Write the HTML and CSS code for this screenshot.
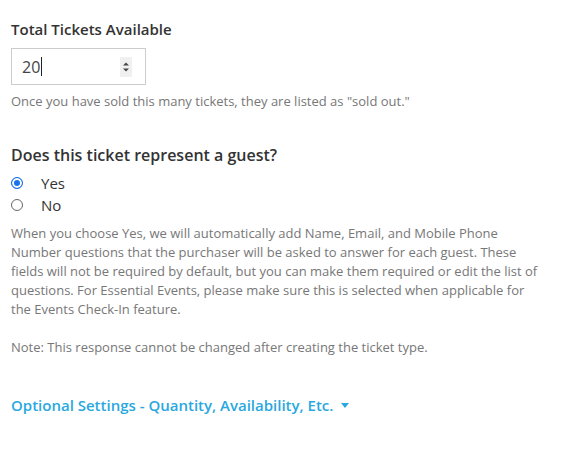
FILE: index.html
```html
<!DOCTYPE html>
<html>
<head>
<meta charset="utf-8">
<link rel="stylesheet" href="styles.css">
</head>
<body>
<div class="page">
  <section class="field">
    <div class="label">Total Tickets Available</div>
    <div class="num-input">
      <span class="value">20</span><span class="caret"></span>
      <span class="spin">
        <svg width="12" height="20" viewBox="0 0 12 20"><path d="M3 8.5 L6 5.5 L9 8.5 Z" fill="#444"/><path d="M3 11.5 L6 14.5 L9 11.5 Z" fill="#444"/></svg>
      </span>
    </div>
    <p class="help">Once you have sold this many tickets, they are listed as "sold out."</p>
  </section>

  <section class="field guest">
    <div class="question">Does this ticket represent a guest?</div>
    <div class="radios">
      <div class="radio-row"><span class="radio checked"></span><span class="radio-label">Yes</span></div>
      <div class="radio-row"><span class="radio"></span><span class="radio-label">No</span></div>
    </div>
    <p class="desc">When you choose Yes, we will automatically add Name, Email, and Mobile Phone Number questions that the purchaser will be asked to answer for each guest. These fields will not be required by default, but you can make them required or edit the list of questions. For Essential Events, please make sure this is selected when applicable for the Events Check-In feature.</p>
    <p class="desc note">Note: This response cannot be changed after creating the ticket type.</p>
  </section>

  <div class="optional">Optional Settings - Quantity, Availability, Etc. <span class="tri"></span></div>
</div>
</body>
</html>
```
FILE: styles.css
```css
html, body { margin: 0; padding: 0; background: #fff; }
body { font-family: "Open Sans", "Liberation Sans", sans-serif; color: #333; }
.page { padding: 19px 0 0 11px; width: 530px; }
.label { font-size: 15px; font-weight: 600; line-height: 20px; color: #333; }
.num-input {
  margin-top: 9px; width: 133px; height: 35px; border: 1px solid #ccc;
  display: flex; align-items: center; box-sizing: content-box;
}
.value { font-size: 16px; color: #444; margin-left: 10px; line-height: 20px; }
.caret { width: 1px; height: 19px; background: #222; margin-left: 1px; }
.spin { margin-left: auto; margin-right: 13px; width: 12px; height: 20px; background: #f0f0f0; display: flex; }
.help { margin: 7px 0 0; font-size: 13px; line-height: 18px; color: #777; }
.guest { margin-top: 34px; }
.question { font-size: 16px; font-weight: 600; line-height: 22px; color: #333; }
.radios { margin-top: 6px; }
.radio-row { display: flex; align-items: center; height: 22px; }
.radio { width: 10px; height: 10px; border: 1px solid #666; border-radius: 50%; box-sizing: content-box; }
.radio.checked { border-color: #1a73e8; background: #1a73e8; box-shadow: inset 0 0 0 2px #fff; }
.radio-label { margin-left: 18px; font-size: 15px; color: #333; }
.desc { margin: 8px 0 0; font-size: 13px; line-height: 19px; color: #777; }
.desc.note { margin-top: 19px; }
.optional { margin-top: 38px; font-size: 15px; font-weight: 600; color: #29a8e0; line-height: 20px; display: flex; align-items: center; }
.tri { width: 0; height: 0; border-left: 4px solid transparent; border-right: 4px solid transparent; border-top: 5px solid #29a8e0; margin-left: 8px; }
```
